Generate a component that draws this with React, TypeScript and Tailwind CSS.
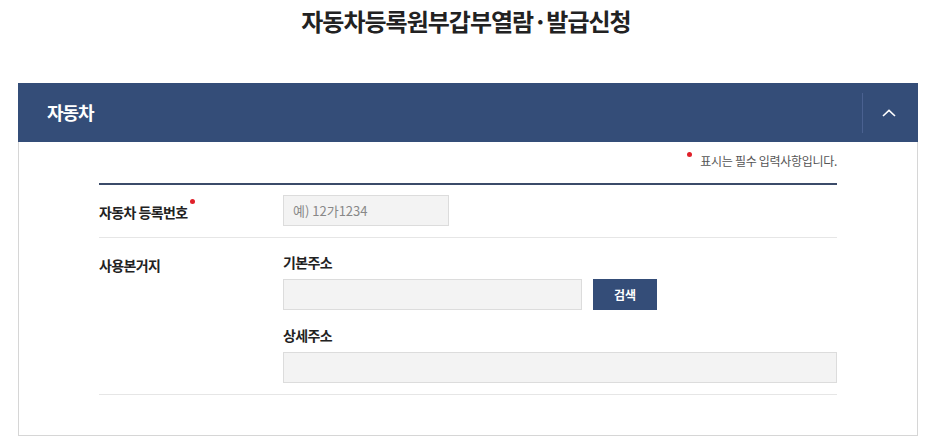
import React from 'react';

const font = { fontFamily: '"Noto Sans CJK KR", "Noto Sans", sans-serif' };

const RequiredDot = () => (
  <span className="absolute -right-[7px] -top-[3px] h-[5px] w-[5px] rounded-full bg-[#e0202a]" />
);

const App: React.FC = () => {
  return (
    <div className="w-full min-h-[444px] bg-white text-[#222]" style={font}>
      <h1 className="pt-[4px] text-center text-[24px] font-bold leading-[34px] tracking-[-1px] text-[#222]">
        자동차등록원부갑부열람·발급신청
      </h1>

      <section className="ml-[18px] mt-[45px] w-[900px]">
        {/* Header bar */}
        <div className="flex h-[59px] items-center bg-[#344d78]">
          <h2 className="flex-1 pl-[29px] text-[18px] font-bold tracking-[-1px] text-white">자동차</h2>
          <div className="h-[40px] w-px bg-[#4a6190]" />
          <button className="flex h-full w-[55px] items-center justify-center pr-[4px]">
            <svg width="14" height="8" viewBox="0 0 14 8" fill="none">
              <path d="M1 7 L7 1.3 L13 7" stroke="white" strokeWidth="1.6" />
            </svg>
          </button>
        </div>

        {/* Content */}
        <div className="border border-t-0 border-[#d6d6d6] px-[80px] pb-[40px] pt-[9px]">
          <p className="flex justify-end text-[12px] leading-[20px] tracking-[-0.3px] text-[#555]">
            <span className="relative mr-[8px] mt-[1px] h-[5px] w-[5px] rounded-full bg-[#e0202a]" />
            표시는 필수 입력사항입니다.
          </p>

          <div className="mt-[12px] h-[2px] bg-[#3b4b69]" />

          {/* Row 1 */}
          <div className="flex items-center border-b border-[#e6e6e6] pb-[11px] pt-[10px]">
            <div className="w-[184px]">
              <span className="relative text-[14px] font-bold tracking-[-0.6px] text-[#222]">
                자동차 등록번호
                <RequiredDot />
              </span>
            </div>
            <input
              placeholder="예) 12가1234"
              className="h-[31px] w-[166px] border border-[#dcdcdc] bg-[#f3f3f3] px-[9px] text-[13px] text-[#333] placeholder:text-[#888] outline-none"
            />
          </div>

          {/* Row 2 */}
          <div className="flex border-b border-[#e6e6e6] pb-[11px] pt-[14px]">
            <div className="w-[184px] pt-[3px] text-[14px] font-bold leading-[20px] tracking-[-0.6px] text-[#222]">
              사용본거지
            </div>
            <div className="flex-1">
              <div className="text-[14px] font-bold leading-[20px] tracking-[-0.6px] text-[#222]">기본주소</div>
              <div className="mt-[7px] flex gap-[11px]">
                <input className="h-[31px] w-[299px] border border-[#dcdcdc] bg-[#f3f3f3] outline-none" />
                <button className="h-[31px] w-[64px] bg-[#344d78] text-[12px] font-bold text-white">검색</button>
              </div>
              <div className="mt-[15px] text-[14px] font-bold leading-[20px] tracking-[-0.6px] text-[#222]">상세주소</div>
              <input className="mt-[7px] h-[31px] w-[554px] border border-[#dcdcdc] bg-[#f3f3f3] outline-none" />
            </div>
          </div>
        </div>
      </section>
    </div>
  );
};

export default App;
